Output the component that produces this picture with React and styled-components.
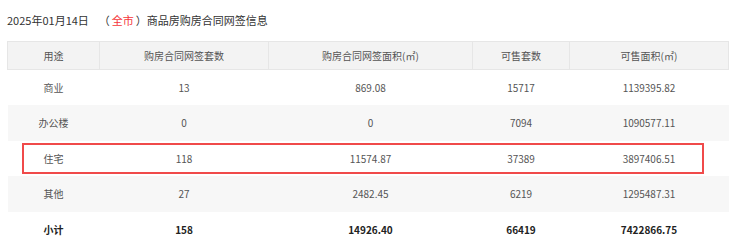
import React from 'react';
import styled, { createGlobalStyle } from 'styled-components';

const GlobalStyle = createGlobalStyle`
  html, body {
    margin: 0;
    padding: 0;
    background: #fff;
  }
  body {
    font-family: "Noto Sans CJK SC", "Noto Sans", sans-serif;
    color: #333;
  }
`;

const Page = styled.div`
  padding: 11px 12px 0 7px;
`;

const Title = styled.div`
  font-size: 11px;
  line-height: 18px;
  color: #333;
  height: 30px;
  display: flex;
  align-items: flex-start;
  white-space: nowrap;
`;

const DateText = styled.span`
  margin-right: 10px;
`;

const City = styled.span`
  color: #f5363a;
  margin: 0 2px;
`;

const TableWrap = styled.div`
  position: relative;
  width: 721px;
`;

const Table = styled.table`
  width: 100%;
  border-collapse: collapse;
  table-layout: fixed;
  font-size: 10px;
`;

const HeadCell = styled.th`
  height: 27px;
  padding: 0;
  background: #f3f3f3;
  border: 1px solid #e6e6e6;
  font-weight: normal;
  color: #555;
  text-align: center;
`;

const Row = styled.tr`
  height: 35.5px;
  background: ${(p) => (p.$striped ? '#f7f7f7' : '#fff')};
`;

const Cell = styled.td`
  padding: 0;
  text-align: center;
  color: ${(p) => (p.$bold ? '#222' : '#555')};
  font-weight: ${(p) => (p.$bold ? 700 : 400)};
`;

const Highlight = styled.div`
  position: absolute;
  left: 15px;
  top: 102px;
  width: 678px;
  height: 27px;
  border: 2px solid #f04a4a;
  pointer-events: none;
`;

const columns = [
  { title: '用途', width: 92 },
  { title: '购房合同网签套数', width: 169 },
  { title: '购房合同网签面积(㎡)', width: 204 },
  { title: '可售套数', width: 97 },
  { title: '可售面积(㎡)', width: 159 },
];

const rows = [
  ['商业', '13', '869.08', '15717', '1139395.82'],
  ['办公楼', '0', '0', '7094', '1090577.11'],
  ['住宅', '118', '11574.87', '37389', '3897406.51'],
  ['其他', '27', '2482.45', '6219', '1295487.31'],
];

const total = ['小计', '158', '14926.40', '66419', '7422866.75'];

export default function App() {
  return (
    <Page>
      <GlobalStyle />
      <Title>
        <DateText>2025年01月14日</DateText>
        <span>（</span>
        <City>全市</City>
        <span>）商品房购房合同网签信息</span>
      </Title>
      <TableWrap>
        <Table>
          <colgroup>
            {columns.map((c) => (
              <col key={c.title} style={{ width: c.width }} />
            ))}
          </colgroup>
          <thead>
            <tr>
              {columns.map((c) => (
                <HeadCell key={c.title}>{c.title}</HeadCell>
              ))}
            </tr>
          </thead>
          <tbody>
            {rows.map((r, i) => (
              <Row key={r[0]} $striped={i % 2 === 1}>
                {r.map((v, j) => (
                  <Cell key={j}>{v}</Cell>
                ))}
              </Row>
            ))}
            <Row>
              {total.map((v, j) => (
                <Cell key={j} $bold>
                  {v}
                </Cell>
              ))}
            </Row>
          </tbody>
        </Table>
        <Highlight />
      </TableWrap>
    </Page>
  );
}
